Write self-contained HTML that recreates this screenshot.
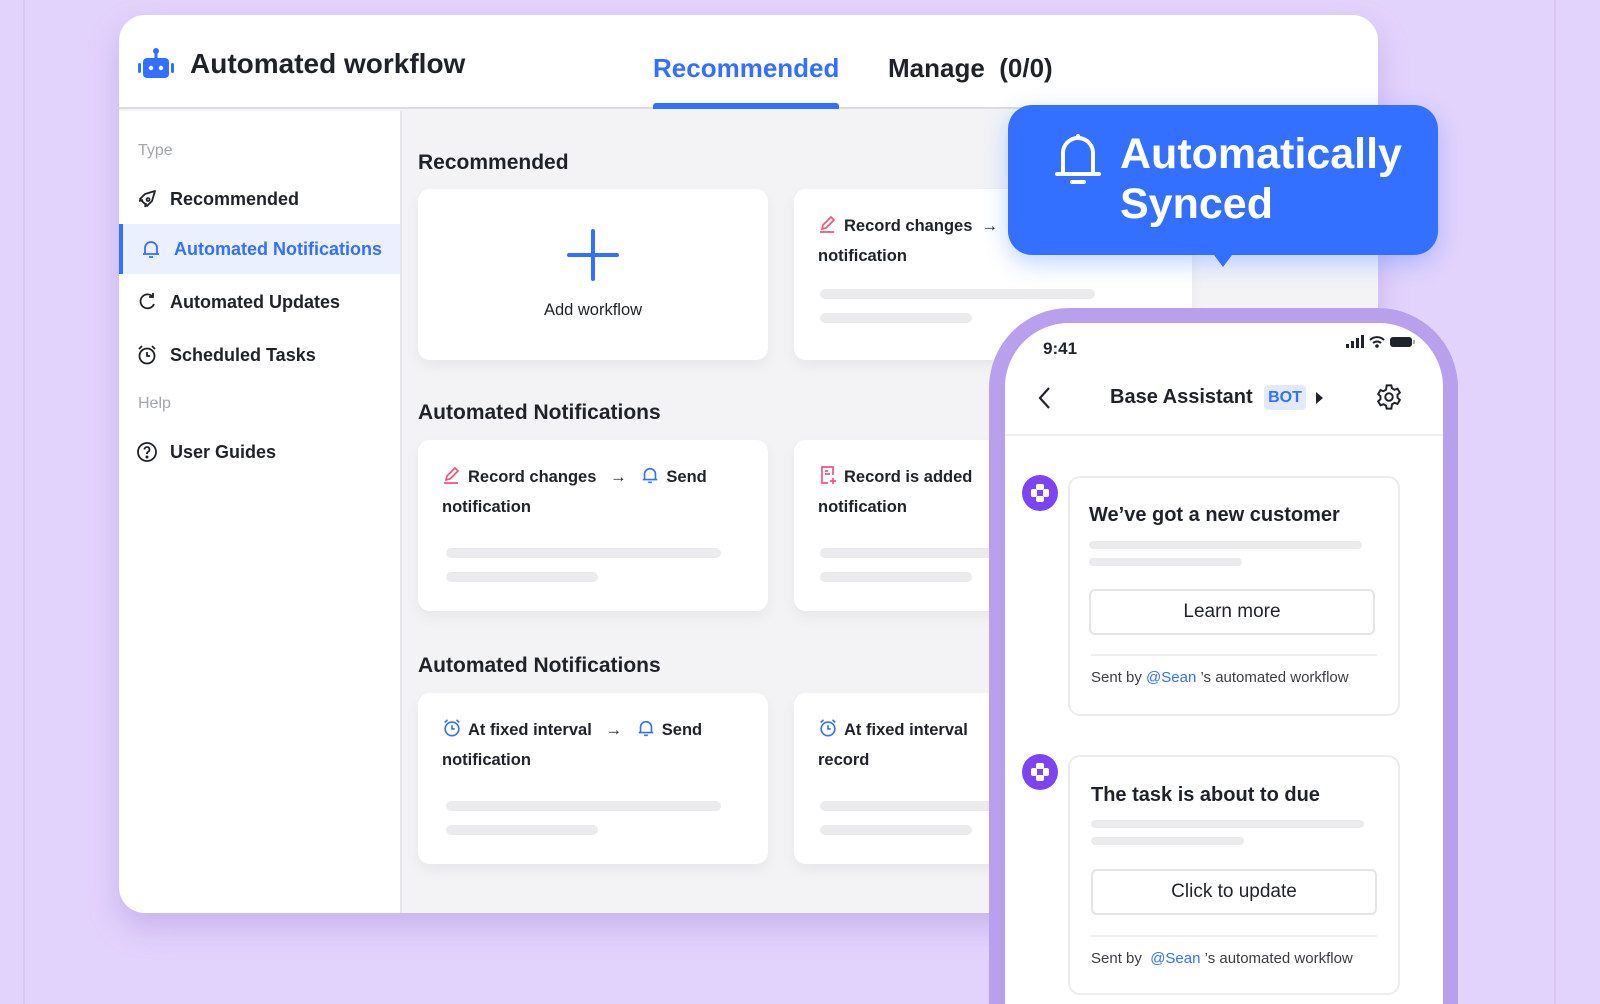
<!DOCTYPE html>
<html><head><meta charset="utf-8">
<style>
*{margin:0;padding:0;box-sizing:border-box}
html{width:1600px;height:1004px;overflow:hidden}
body{width:1600px;height:1004px;background:#e2d3fc;position:relative;overflow:hidden;font-family:"Liberation Sans",sans-serif;color:#1f2329}
.abs{position:absolute}
.vline{position:absolute;top:0;bottom:0;width:2px;background:#d9c8f5}
.panel{position:absolute;left:119px;top:15px;width:1259px;height:898px;background:#f3f3f6;border-radius:26px;overflow:hidden;box-shadow:0 14px 30px rgba(150,120,210,.35)}
.hdr{position:absolute;left:0;top:0;width:100%;height:94px;background:#fff;border-bottom:2px solid #dcdde2}
.side{position:absolute;left:0;top:96px;width:283px;bottom:0;background:#fff;border-right:2px solid #e4e5ea}
.si{position:absolute;left:0;width:281px;height:50px;font-size:18px;font-weight:bold;display:flex;align-items:center;padding-left:17px}
.si svg{margin-right:12px}
.lbl{position:absolute;left:19px;font-size:16px;color:#a3a6ad}
.card{position:absolute;background:#fff;border-radius:12px;box-shadow:0 6px 14px rgba(0,0,0,.05)}
.h2{position:absolute;font-size:21px;font-weight:bold;color:#1f2329}
.ct{position:absolute;left:24px;top:22px;font-size:16.5px;font-weight:bold;line-height:30px;color:#1f2329}
.bar{position:absolute;height:10px;border-radius:5px;background:#ebebee}
.ic{display:inline-block;vertical-align:-3px;margin-right:6px}
.bubble{position:absolute;left:1008px;top:105px;width:430px;height:150px;background:#3370ff;border-radius:24px;box-shadow:0 8px 24px rgba(51,112,255,.3)}
.phone{position:absolute;left:989px;top:308px;width:469px;height:696px;border-radius:80px 80px 0 0;background:#b9a0ec}
.screen{position:absolute;left:1005px;top:323px;width:438px;height:681px;border-radius:64px 64px 0 0;background:#fff;overflow:hidden}
.mc{position:absolute;left:63px;width:332px;background:#fff;border:2px solid #ececf0;border-radius:12px}
.btn{position:absolute;left:19px;width:286px;height:46px;border:2px solid #e3e4e8;border-radius:6px;font-size:19px;text-align:center;line-height:42px;color:#1f2329}
.sent{position:absolute;left:21px;font-size:15px;color:#3a3d44;white-space:nowrap}
.sent b{font-weight:normal;color:#3370ff}
.av{position:absolute;left:17px;width:36px;height:36px;border-radius:50%;background:#7c45f1}
</style></head><body>
<div class="vline" style="left:23px"></div>
<div class="vline" style="left:1554px"></div>

<div class="panel">
  <div class="hdr">
    <svg class="abs" style="left:17px;top:32px" width="40" height="34" viewBox="0 0 40 34">
      <circle cx="20" cy="4" r="3" fill="#3370ff"/><rect x="18.5" y="4" width="3" height="8" fill="#3370ff"/>
      <rect x="7" y="11" width="26" height="20" rx="4" fill="#3370ff"/>
      <rect x="2" y="16" width="3" height="10" rx="1.5" fill="#3370ff"/><rect x="35" y="16" width="3" height="10" rx="1.5" fill="#3370ff"/>
      <circle cx="15" cy="21" r="2.2" fill="#fff"/><circle cx="25" cy="21" r="2.2" fill="#fff"/>
    </svg>
    <div class="abs" style="left:71px;top:33px;font-size:28px;font-weight:bold;color:#1f2329">Automated workflow</div>
    <div class="abs" style="left:534px;top:38px;font-size:26px;font-weight:bold;color:#3370ff">Recommended</div>
    <div class="abs" style="left:534px;top:88px;width:186px;height:6px;border-radius:3px 3px 0 0;background:#3370ff"></div>
    <div class="abs" style="left:769px;top:38px;font-size:26px;font-weight:bold;color:#1f2329">Manage &nbsp;(0/0)</div>
  </div>
  <div class="side">
    <div class="lbl" style="top:31px">Type</div>
    <div class="si" style="top:63px"><svg width="22" height="22" viewBox="0 0 22 22" fill="none" stroke="#1f2329" stroke-width="1.8" stroke-linejoin="round"><path d="M19 3 L9 6 L4 11 L11 18 L16 13 L19 3Z M7 12 L3 13 M10 15 L9 19 M12 10 a1.5 1.5 0 1 0 .1 0"/></svg>Recommended</div>
    <div class="si" style="top:113px;background:#ebf0fe;color:#3370ff;border-left:4px solid #3370ff;padding-left:17px"><svg width="22" height="22" viewBox="0 0 22 22" fill="none" stroke="#3370ff" stroke-width="1.8"><path d="M5 16 V10 a6 6 0 0 1 12 0 V16 H3 H19 M9 19 H13"/></svg>Automated Notifications</div>
    <div class="si" style="top:166px"><svg width="22" height="22" viewBox="0 0 22 22" fill="none" stroke="#1f2329" stroke-width="1.8"><path d="M17 6 A7 7 0 1 0 18 13 M17 2 V6 H13"/></svg>Automated Updates</div>
    <div class="si" style="top:219px"><svg width="22" height="22" viewBox="0 0 22 22" fill="none" stroke="#1f2329" stroke-width="1.8"><circle cx="11" cy="12" r="7.5"/><path d="M11 8 V12 H14 M3 5 L6 2 M19 5 L16 2"/></svg>Scheduled Tasks</div>
    <div class="lbl" style="top:284px">Help</div>
    <div class="si" style="top:316px"><svg width="22" height="22" viewBox="0 0 22 22" fill="none" stroke="#1f2329" stroke-width="1.8"><circle cx="11" cy="11" r="9"/><path d="M8.5 8.5 a2.5 2.5 0 1 1 3.5 2.3 C11 11.3 11 12 11 13"/><circle cx="11" cy="16" r=".6" fill="#1f2329"/></svg>User Guides</div>
  </div>

  <div class="h2" style="left:299px;top:136px">Recommended</div>
  <div class="card" style="left:299px;top:174px;width:350px;height:171px">
    <svg class="abs" style="left:149px;top:40px" width="52" height="52" viewBox="0 0 52 52"><path d="M26 2 V50 M2 26 H50" stroke="#3370ff" stroke-width="4" stroke-linecap="round"/></svg>
    <div class="abs" style="left:0;width:100%;top:112px;text-align:center;font-size:16.5px;color:#1f2329">Add workflow</div>
  </div>
  <div class="card" style="left:675px;top:174px;width:398px;height:171px">
    <div class="ct"><svg class="ic" width="20" height="20" viewBox="0 0 20 20" fill="none" stroke="#f0567b" stroke-width="1.7"><path d="M4 15 L5 11 L13 3 L16 6 L8 14 Z M2 18 H16"/></svg>Record changes &nbsp;→<br>notification</div>
    <div class="bar" style="left:26px;top:100px;width:275px"></div><div class="bar" style="left:26px;top:124px;width:152px"></div>
  </div>

  <div class="h2" style="left:299px;top:386px">Automated Notifications</div>
  <div class="card" style="left:299px;top:425px;width:350px;height:171px">
    <div class="ct"><svg class="ic" width="20" height="20" viewBox="0 0 20 20" fill="none" stroke="#f0567b" stroke-width="1.7"><path d="M4 15 L5 11 L13 3 L16 6 L8 14 Z M2 18 H16"/></svg>Record changes &nbsp;&nbsp;→ &nbsp;&nbsp;<svg class="ic" width="20" height="20" viewBox="0 0 22 22" fill="none" stroke="#3370ff" stroke-width="1.8"><path d="M5 16 V10 a6 6 0 0 1 12 0 V16 H3 H19 M9 19 H13"/></svg>Send<br>notification</div>
    <div class="bar" style="left:28px;top:108px;width:275px"></div><div class="bar" style="left:28px;top:132px;width:152px"></div>
  </div>
  <div class="card" style="left:675px;top:425px;width:398px;height:171px">
    <div class="ct"><svg class="ic" width="20" height="20" viewBox="0 0 20 20" fill="none" stroke="#f0567b" stroke-width="1.7"><path d="M15 10 V2 H4 V18 H10 M7 6 H10 M7 9 H12 M15 13 V19 M12 16 H18"/></svg>Record is added<br>notification</div>
    <div class="bar" style="left:26px;top:108px;width:275px"></div><div class="bar" style="left:26px;top:132px;width:152px"></div>
  </div>

  <div class="h2" style="left:299px;top:639px">Automated Notifications</div>
  <div class="card" style="left:299px;top:678px;width:350px;height:171px">
    <div class="ct"><svg class="ic" width="20" height="20" viewBox="0 0 22 22" fill="none" stroke="#3370ff" stroke-width="1.8"><circle cx="11" cy="12" r="7.5"/><path d="M11 8 V12 H14 M3 5 L6 2 M19 5 L16 2"/></svg>At fixed interval &nbsp;&nbsp;→ &nbsp;&nbsp;<svg class="ic" width="20" height="20" viewBox="0 0 22 22" fill="none" stroke="#3370ff" stroke-width="1.8"><path d="M5 16 V10 a6 6 0 0 1 12 0 V16 H3 H19 M9 19 H13"/></svg>Send<br>notification</div>
    <div class="bar" style="left:28px;top:108px;width:275px"></div><div class="bar" style="left:28px;top:132px;width:152px"></div>
  </div>
  <div class="card" style="left:675px;top:678px;width:398px;height:171px">
    <div class="ct"><svg class="ic" width="20" height="20" viewBox="0 0 22 22" fill="none" stroke="#3370ff" stroke-width="1.8"><circle cx="11" cy="12" r="7.5"/><path d="M11 8 V12 H14 M3 5 L6 2 M19 5 L16 2"/></svg>At fixed interval<br>record</div>
    <div class="bar" style="left:26px;top:108px;width:275px"></div><div class="bar" style="left:26px;top:132px;width:152px"></div>
  </div>
</div>

<div class="bubble">
  <svg class="abs" style="left:46px;top:28px" width="48" height="52" viewBox="0 0 48 52" fill="none" stroke="#fff" stroke-width="4" stroke-linecap="round"><path d="M9 41 V20 a15 15 0 0 1 30 0 V41 M3 41 H45 M18 49 H30 M24 3 V5"/></svg>
  <div class="abs" style="left:112px;top:24px;font-size:43px;font-weight:bold;color:#fff;line-height:50px">Automatically<br>Synced</div>
  <div class="abs" style="left:203px;top:146px;width:0;height:0;border-left:12px solid transparent;border-right:12px solid transparent;border-top:16px solid #3370ff"></div>
</div>

<div class="phone"></div>
<div class="screen">
  <div class="abs" style="left:38px;top:16px;font-size:17px;font-weight:bold">9:41</div>
  <svg class="abs" style="left:341px;top:12px" width="80" height="14" viewBox="0 0 80 14">
    <rect x="0" y="9" width="3" height="4" fill="#1f2329"/><rect x="5" y="6" width="3" height="7" fill="#1f2329"/><rect x="10" y="3" width="3" height="10" fill="#1f2329"/><rect x="15" y="0" width="3" height="13" fill="#1f2329"/>
    <path d="M24 5 a10 10 0 0 1 14 0 M27 8 a6 6 0 0 1 8 0" stroke="#1f2329" stroke-width="2" fill="none"/><circle cx="31" cy="11" r="1.8" fill="#1f2329"/>
    <rect x="44" y="2" width="22" height="10" rx="3" fill="#1f2329"/><rect x="67" y="5" width="2" height="4" fill="#aaa"/>
  </svg>
  <svg class="abs" style="left:30px;top:62px" width="20" height="26" viewBox="0 0 20 26"><path d="M14 3 L5 13 L14 23" stroke="#1f2329" stroke-width="2.2" fill="none"/></svg>
  <div class="abs" style="left:105px;top:63px;font-size:20px;font-weight:bold">Base Assistant</div>
  <div class="abs" style="left:259px;top:62px;width:42px;height:25px;border-radius:4px;background:#e1eaff;color:#3370ff;font-size:16px;font-weight:bold;text-align:center;line-height:25px">BOT</div>
  <div class="abs" style="left:311px;top:69px;width:0;height:0;border-top:6px solid transparent;border-bottom:6px solid transparent;border-left:7px solid #1f2329"></div>
  <svg class="abs" style="left:370px;top:60px" width="28" height="28" viewBox="0 0 24 24" fill="none" stroke="#1f2329" stroke-width="1.7"><circle cx="12" cy="12" r="3.2"/><path d="M10 2h4l.6 2.6 2.2 1.2 2.5-.9 2 3.4-2 1.8v2.6l2 1.8-2 3.4-2.5-.9-2.2 1.2L14 22h-4l-.6-2.6-2.2-1.2-2.5.9-2-3.4 2-1.8v-2.6l-2-1.8 2-3.4 2.5.9 2.2-1.2z"/></svg>
  <div class="abs" style="left:0;top:111px;width:100%;height:2px;background:#eeeff2"></div>

  <div class="av" style="top:152px"><svg width="36" height="36" viewBox="0 0 36 36"><g fill="#fff"><rect x="14" y="9" width="8" height="6" rx="2"/><rect x="14" y="21" width="8" height="6" rx="2"/><rect x="9" y="14" width="6" height="8" rx="2"/><rect x="21" y="14" width="6" height="8" rx="2"/></g><circle cx="18" cy="18" r="3" fill="#7c45f1"/></svg></div>
  <div class="mc" style="top:153px;height:240px">
    <div class="abs" style="left:19px;top:26px;font-size:20px;font-weight:bold">We’ve got a new customer</div>
    <div class="bar" style="left:19px;top:63px;width:273px;height:8px"></div>
    <div class="bar" style="left:19px;top:80px;width:153px;height:8px"></div>
    <div class="btn" style="top:111px">Learn more</div>
    <div class="abs" style="left:21px;top:176px;width:286px;height:2px;background:#eeeff2"></div>
    <div class="sent" style="top:191px">Sent by <b>@Sean</b> ’s automated workflow</div>
  </div>

  <div class="av" style="top:431px"><svg width="36" height="36" viewBox="0 0 36 36"><g fill="#fff"><rect x="14" y="9" width="8" height="6" rx="2"/><rect x="14" y="21" width="8" height="6" rx="2"/><rect x="9" y="14" width="6" height="8" rx="2"/><rect x="21" y="14" width="6" height="8" rx="2"/></g><circle cx="18" cy="18" r="3" fill="#7c45f1"/></svg></div>
  <div class="mc" style="top:432px;height:240px">
    <div class="abs" style="left:21px;top:27px;font-size:20px;font-weight:bold">The task is about to due</div>
    <div class="bar" style="left:21px;top:63px;width:273px;height:8px"></div>
    <div class="bar" style="left:21px;top:80px;width:153px;height:8px"></div>
    <div class="btn" style="left:21px;top:112px">Click to update</div>
    <div class="abs" style="left:21px;top:178px;width:286px;height:2px;background:#eeeff2"></div>
    <div class="sent" style="top:193px">Sent by &nbsp;<b>@Sean</b> ’s automated workflow</div>
  </div>
</div>
</body></html>
